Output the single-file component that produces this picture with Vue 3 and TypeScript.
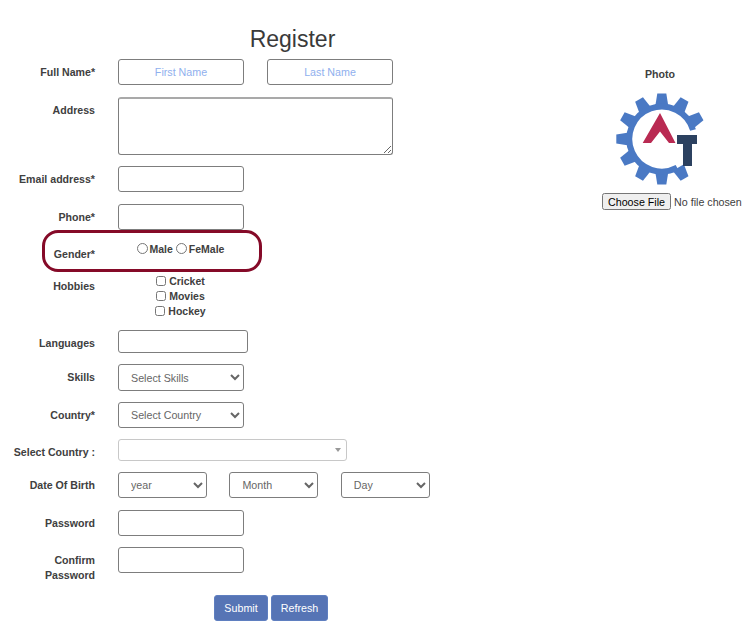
<script setup lang="ts">
const teeth: number[] = [0, 30, 60, 150, 180, 210, 240, 270, 300, 330]
const dobSelects: string[] = ['year', 'Month', 'Day']
</script>

<template>
  <div class="page">
    <form class="form" @submit.prevent>
      <h1 class="title">Register</h1>
      <div class="rows">
        <div class="row">
          <label class="lbl">Full Name*</label>
          <div class="pair">
            <input class="inp ph" type="text" placeholder="First Name" />
            <input class="inp ph" type="text" placeholder="Last Name" />
          </div>
        </div>
        <div class="row">
          <label class="lbl">Address</label>
          <textarea class="area"></textarea>
        </div>
        <div class="row loose">
          <label class="lbl">Email address*</label>
          <input class="inp" type="email" />
        </div>
        <div class="row">
          <label class="lbl">Phone*</label>
          <input class="inp" type="tel" />
        </div>
        <div class="row gender">
          <label class="lbl">Gender*</label>
          <div class="center-box">
            <label class="opt"><input class="radio" type="radio" name="g" />Male</label>
            <label class="opt"><input class="radio" type="radio" name="g" />FeMale</label>
          </div>
          <span class="ring"></span>
        </div>
        <div class="row hobbies loose">
          <label class="lbl">Hobbies</label>
          <div class="center-box stack">
            <label class="opt"><input class="check" type="checkbox" />Cricket</label>
            <label class="opt"><input class="check" type="checkbox" />Movies</label>
            <label class="opt"><input class="check" type="checkbox" />Hockey</label>
          </div>
        </div>
        <div class="row">
          <label class="lbl">Languages</label>
          <input class="inp lang" type="text" />
        </div>
        <div class="row">
          <label class="lbl">Skills</label>
          <select class="sel skills"><option>Select Skills</option></select>
        </div>
        <div class="row">
          <label class="lbl">Country*</label>
          <select class="sel"><option>Select Country</option></select>
        </div>
        <div class="row">
          <label class="lbl">Select Country :</label>
          <div class="select2"><span class="caret"></span></div>
        </div>
        <div class="row loose">
          <label class="lbl">Date Of Birth</label>
          <div class="dob">
            <select v-for="d in dobSelects" :key="d" class="sel small"><option>{{ d }}</option></select>
          </div>
        </div>
        <div class="row">
          <label class="lbl">Password</label>
          <input class="inp" type="password" />
        </div>
        <div class="row confirm loose">
          <label class="lbl">Confirm<br />Password</label>
          <input class="inp" type="password" />
        </div>
        <div class="actions">
          <button class="btn" type="submit">Submit</button>
          <button class="btn refresh" type="button">Refresh</button>
        </div>
      </div>
    </form>

    <aside class="photo">
      <div class="photo-title">Photo</div>
      <svg class="logo" viewBox="0 0 100 100" width="100" height="100" aria-label="AT logo">
        <g transform="translate(1.8 0)">
          <g fill="#4a79c4">
            <path
              v-for="t in teeth"
              :key="t"
              d="M45.5 4.5 H54.5 L56.5 17 H43.5 Z"
              :transform="`rotate(${t} 50 50)`"
            />
          </g>
          <path
            d="M 81.2 41 A 32.5 32.5 0 1 0 65.3 78.7"
            fill="none"
            stroke="#4a79c4"
            stroke-width="6"
          />
        </g>
        <path d="M50 24 L32.7 54 L41 54 L50 42.5 L59 54 L65.5 54 Z" fill="#b92a52" />
        <path d="M67 46 H87 V55 H82 V77 H73 V55 H67 Z" fill="#2c4160" />
      </svg>
      <input class="file" type="file" />
    </aside>
  </div>
</template>

<style scoped>
.page {
  display: flex;
  width: 751px;
  height: 622px;
  overflow: hidden;
  font-family: "Liberation Sans", Arial, sans-serif;
  color: #404040;
  background: #fff;
}
.form {
  width: 585px;
  flex: none;
  padding-top: 25px;
  box-sizing: border-box;
}
.title {
  margin: 0 0 6px;
  font-size: 23px;
  line-height: 28px;
  font-weight: 400;
  text-align: center;
  color: #3a3a3a;
}
.rows {
  display: flex;
  flex-direction: column;
  gap: 11px;
}
.row {
  display: flex;
  align-items: flex-start;
  gap: 23px;
}
.row.loose {
  margin-bottom: 1px;
}
.row:first-child {
  margin-bottom: 1px;
}
.lbl {
  width: 95px;
  flex: none;
  padding-top: 6px;
  font-size: 10.6px;
  line-height: 15px;
  font-weight: 700;
  text-align: right;
  white-space: nowrap;
}
.pair {
  display: flex;
  gap: 23px;
}
.inp {
  width: 126px;
  height: 26px;
  box-sizing: border-box;
  padding: 0 8px;
  border: 1px solid #7d7d7d;
  border-radius: 3px;
  background: #fff;
  font: 10.7px "Liberation Sans", Arial, sans-serif;
}
.ph {
  text-align: center;
}
.ph::placeholder {
  color: #8fb0ee;
  opacity: 1;
}
.area {
  display: block;
  width: 275px;
  height: 58px;
  box-sizing: border-box;
  margin: 0;
  border: 1px solid #7d7d7d;
  border-top: 2px solid #a9a9a9;
  border-radius: 3px;
  font: 10.7px "Liberation Sans", Arial, sans-serif;
}
.lang {
  width: 130px;
  height: 23px;
}
.center-box {
  width: 125px;
  flex: none;
  text-align: center;
  font-size: 10.5px;
  line-height: 15px;
  font-weight: 700;
}
.gender {
  position: relative;
  height: 21px;
}
.gender .center-box {
  padding-top: 1px;
}
.opt {
  white-space: nowrap;
}
.gender .opt + .opt {
  margin-left: 3px;
}
.radio {
  width: 11px;
  height: 11px;
  margin: 0 2px 0 0;
  vertical-align: -1px;
}
.check {
  width: 10px;
  height: 10px;
  margin: 0 3px 0 0;
  vertical-align: -1px;
}
.ring {
  position: absolute;
  left: 42px;
  top: -11px;
  width: 220px;
  height: 42px;
  box-sizing: border-box;
  border: 3.5px solid #850a28;
  border-radius: 16px;
  pointer-events: none;
}
.stack {
  display: flex;
  flex-direction: column;
  align-items: center;
  padding-top: 1px;
}
.hobbies {
  height: 45px;
}
.sel {
  width: 126px;
  height: 26px;
  box-sizing: border-box;
  padding: 0 8px;
  border: 1px solid #7d7d7d;
  border-radius: 3px;
  background: #fff;
  color: #666;
  font: 10.7px "Liberation Sans", Arial, sans-serif;
}
.skills {
  height: 27px;
}
.small {
  width: 89px;
}
.dob {
  display: flex;
  gap: 22.4px;
}
.select2 {
  position: relative;
  width: 229px;
  height: 22px;
  box-sizing: border-box;
  border: 1px solid #c8c8c8;
  border-radius: 3px;
  background: #fff;
}
.caret {
  position: absolute;
  right: 5px;
  top: 8px;
  width: 0;
  height: 0;
  border-left: 3px solid transparent;
  border-right: 3px solid transparent;
  border-top: 4px solid #999;
}
.confirm {
  height: 36px;
}
.actions {
  display: flex;
  gap: 3px;
  padding-left: 214px;
}
.btn {
  width: 54px;
  height: 26px;
  padding: 0;
  border: 1px solid #5f7fc0;
  border-radius: 3px;
  background: #5674b5;
  color: #fff;
  font: 10.7px "Liberation Sans", Arial, sans-serif;
}
.refresh {
  width: 57px;
}
.photo {
  display: flex;
  flex-direction: column;
  align-items: center;
  width: 116px;
  margin-left: 17px;
  padding-top: 67px;
  flex: none;
}
.photo-title {
  font-size: 10.6px;
  line-height: 14px;
  font-weight: 700;
}
.logo {
  display: block;
  margin-top: 8px;
  flex: none;
}
.file {
  align-self: flex-start;
  width: 149px;
  margin-top: 4px;
  font: 10.7px "Liberation Sans", Arial, sans-serif;
  flex: none;
}
.file::file-selector-button {
  height: 17px;
  padding: 0 4px;
  margin-right: 3px;
  font: 10.7px "Liberation Sans", Arial, sans-serif;
}
</style>
